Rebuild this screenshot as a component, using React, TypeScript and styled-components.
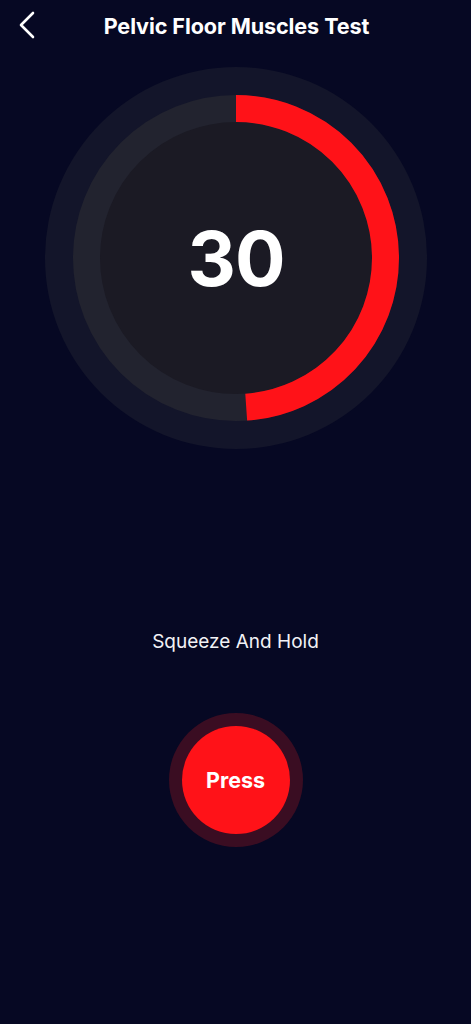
import React from "react";
import styled, { createGlobalStyle } from "styled-components";

const Global = createGlobalStyle`
  html, body { margin: 0; padding: 0; background: #060823; }
  body { font-family: Inter, "Noto Sans", sans-serif; color: #fff; }
`;

const Screen = styled.div`
  width: 471px;
  min-height: 1024px;
  background: #060823;
  display: flex;
  flex-direction: column;
  align-items: center;
`;

const Header = styled.header`
  width: 100%;
  height: 50px;
  display: flex;
  align-items: center;
  justify-content: center;
  position: relative;
`;

const BackButton = styled.button`
  position: absolute;
  left: 14px;
  top: 9px;
  width: 26px;
  height: 32px;
  padding: 0;
  border: none;
  background: transparent;
  display: flex;
  align-items: center;
  justify-content: center;
`;

const Title = styled.h1`
  margin: 2px 0 0 2px;
  font-size: 21.6px;
  font-weight: 700;
  letter-spacing: -0.1px;
  color: #fff;
`;

const Dial = styled.div`
  margin-top: 17px;
  width: 382px;
  height: 382px;
  position: relative;
  margin-left: 1px;
`;

const DialValue = styled.div`
  position: absolute;
  inset: 0;
  display: flex;
  align-items: center;
  justify-content: center;
  font-size: 75px;
  font-weight: 700;
  letter-spacing: -1px;
  color: #fff;
`;

const Instruction = styled.p`
  margin: 181px 0 0;
  font-size: 19px;
  line-height: 23px;
  color: #f2f2f6;
`;

const PressRing = styled.div`
  margin-top: 60px;
  width: 134px;
  height: 134px;
  border-radius: 50%;
  background: #3a0d22;
  display: flex;
  align-items: center;
  justify-content: center;
`;

const PressButton = styled.button`
  width: 108px;
  height: 108px;
  border-radius: 50%;
  border: none;
  background: #ff1218;
  color: #fff;
  font-family: Inter, "Noto Sans", sans-serif;
  font-size: 21.5px;
  font-weight: 700;
  padding: 0;
  cursor: pointer;
`;

const R = 149.5;
const C = 2 * Math.PI * R;
const progress = 176 / 360;

export default function App() {
  return (
    <Screen>
      <Global />
      <Header>
        <BackButton aria-label="Back">
          <svg width="18" height="28" viewBox="0 0 18 28" fill="none">
            <path d="M15 2 L3 14 L15 26" stroke="#fff" strokeWidth="2.6" strokeLinecap="round" strokeLinejoin="round" />
          </svg>
        </BackButton>
        <Title>Pelvic Floor Muscles Test</Title>
      </Header>
      <Dial>
        <svg width="382" height="382" viewBox="0 0 382 382">
          <circle cx="191" cy="191" r="191" fill="#13152a" />
          <circle cx="191" cy="191" r={R} fill="#1b1a24" stroke="#22232f" strokeWidth="27" />
          <circle
            cx="191"
            cy="191"
            r={R}
            fill="none"
            stroke="#ff1218"
            strokeWidth="27"
            strokeDasharray={`${C * progress} ${C}`}
            transform="rotate(-90 191 191)"
          />
        </svg>
        <DialValue>30</DialValue>
      </Dial>
      <Instruction>Squeeze And Hold</Instruction>
      <PressRing>
        <PressButton>Press</PressButton>
      </PressRing>
    </Screen>
  );
}
